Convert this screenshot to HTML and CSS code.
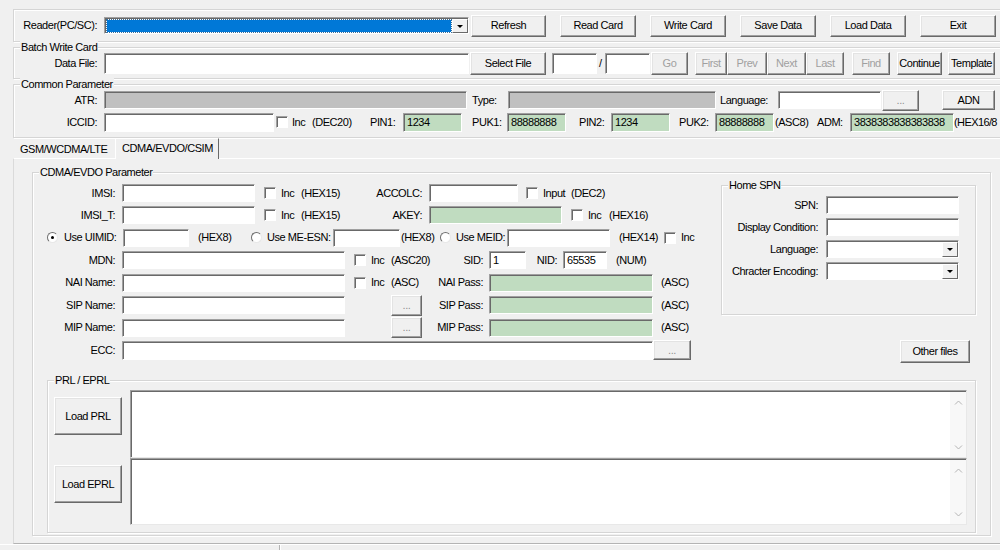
FILE: index.html
```html
<!DOCTYPE html>
<html>
<head>
<meta charset="utf-8">
<title>Card Writer</title>
<link rel="stylesheet" href="styles.css">
</head>
<body>
<div class="window">

  <div class="grp g-reader">
    <div class="row r31">
      <span class="lbl w90">Reader(PC/SC):</span>
      <div class="combo reader w365 h17"><div class="combo-val"></div><div class="drop"><i class="tri"></i></div></div>
      <button class="btn w75 h22 ml2">Refresh</button>
      <button class="btn w76 h22 ml14">Read Card</button>
      <button class="btn w76 h22 ml14">Write Card</button>
      <button class="btn w76 h22 ml14">Save Data</button>
      <button class="btn w76 h22 ml14">Load Data</button>
      <button class="btn w76 h22 ml14">Exit</button>
    </div>
  </div>

  <div class="grp g-batch">
    <span class="grp-title">Batch Write Card</span>
    <div class="row r30">
      <span class="lbl w90">Data File:</span>
      <div class="in w365 h21"></div>
      <button class="btn w76 h23 ml1">Select File</button>
      <div class="in w45 h21 ml6"></div>
      <span class="txt w8 pl2">/</span>
      <div class="in w45 h21"></div>
      <button class="btn dis w37 h23 ml1">Go</button>
      <button class="btn dis w32 h23 ml7">First</button>
      <button class="btn dis w40 h23">Prev</button>
      <button class="btn dis w39 h23">Next</button>
      <button class="btn dis w38 h23">Last</button>
      <button class="btn dis w38 h23 ml8">Find</button>
      <button class="btn w45 h23 ml7">Continue</button>
      <button class="btn w47 h23 ml6">Template</button>
    </div>
  </div>

  <div class="grp g-common">
    <span class="grp-title">Common Parameter</span>
    <div class="row r20">
      <span class="lbl w90">ATR:</span>
      <div class="in gray w363"></div>
      <span class="txt w41 pl5">Type:</span>
      <div class="in gray w208"></div>
      <span class="txt w62 pl4">Language:</span>
      <div class="in w103"></div>
      <button class="btn dots w37 h21 ml1">...</button>
      <button class="btn w53 h20 ml23">ADN</button>
    </div>
    <div class="row r20 mt2">
      <span class="lbl w90">ICCID:</span>
      <div class="in w170 h19"></div>
      <span class="cb ml2"></span>
      <span class="txt w24 pl4">Inc</span>
      <span class="txt w58">(DEC20)</span>
      <span class="txt w33">PIN1:</span>
      <div class="in green w59 h19">1234</div>
      <span class="txt w45 pl10">PUK1:</span>
      <div class="in green w59 h19">88888888</div>
      <span class="txt w45 pl13">PIN2:</span>
      <div class="in green w59 h19">1234</div>
      <span class="txt w45 pl9">PUK2:</span>
      <div class="in green w59 h19">88888888</div>
      <span class="txt w43 pl1">(ASC8)</span>
      <span class="txt w33">ADM:</span>
      <div class="in green w104 h19">3838383838383838</div>
      <span class="txt tight">(HEX16/8</span>
    </div>
  </div>

  <div class="tabs">
    <div class="tab">GSM/WCDMA/LTE</div>
    <div class="tab active">CDMA/EVDO/CSIM</div>
  </div>

  <div class="panel">
    <div class="grp g-cdma">
      <span class="grp-title">CDMA/EVDO Parameter</span>
      <div class="top">
        <div class="form">
          <div class="row r22">
            <span class="lbl w89">IMSI:</span>
            <div class="in w133"></div>
            <span class="cb ml9"></span>
            <span class="txt w25 pl5">Inc</span>
            <span class="txt w44">(HEX15)</span>
            <span class="lbl w84">ACCOLC:</span>
            <div class="in w89"></div>
            <span class="cb ml8"></span>
            <span class="txt w33 pl5">Input</span>
            <span class="txt">(DEC2)</span>
          </div>
          <div class="row r22">
            <span class="lbl w89">IMSI_T:</span>
            <div class="in w133"></div>
            <span class="cb ml9"></span>
            <span class="txt w25 pl5">Inc</span>
            <span class="txt w44">(HEX15)</span>
            <span class="lbl w84">AKEY:</span>
            <div class="in green w133"></div>
            <span class="cb ml9"></span>
            <span class="txt w26 pl5">Inc</span>
            <span class="txt">(HEX16)</span>
          </div>
          <div class="row r23">
            <span class="radio on ml14"></span>
            <span class="txt w65 pl6">Use UIMID:</span>
            <div class="in w66"></div>
            <span class="txt w62 pl9">(HEX8)</span>
            <span class="radio"></span>
            <span class="txt w71 pl5">Use ME-ESN:</span>
            <div class="in w67"></div>
            <span class="txt w40 pl1">(HEX8)</span>
            <span class="radio"></span>
            <span class="txt w56 pl5">Use MEID:</span>
            <div class="in w103"></div>
            <span class="txt w54 pl9">(HEX14)</span>
            <span class="cb"></span>
            <span class="txt pl5">Inc</span>
          </div>
          <div class="row r22">
            <span class="lbl w89">MDN:</span>
            <div class="in w223"></div>
            <span class="cb ml9"></span>
            <span class="txt w25 pl5">Inc</span>
            <span class="txt w49">(ASC20)</span>
            <span class="lbl w49 pr6">SID:</span>
            <div class="in w37">1</div>
            <span class="lbl w37 pr6">NID:</span>
            <div class="in w44">65535</div>
            <span class="txt pl9">(NUM)</span>
          </div>
          <div class="row r23">
            <span class="lbl w89">NAI Name:</span>
            <div class="in w223"></div>
            <span class="cb ml9"></span>
            <span class="txt w25 pl5">Inc</span>
            <span class="txt w34">(ASC)</span>
            <span class="lbl w64 pr6">NAI Pass:</span>
            <div class="in green w164"></div>
            <span class="txt pl8">(ASC)</span>
          </div>
          <div class="row r22">
            <span class="lbl w89">SIP Name:</span>
            <div class="in w223"></div>
            <button class="btn dots w31 h21 ml46">...</button>
            <span class="lbl w67 pr6">SIP Pass:</span>
            <div class="in green w164"></div>
            <span class="txt pl8">(ASC)</span>
          </div>
          <div class="row r23">
            <span class="lbl w89">MIP Name:</span>
            <div class="in w223"></div>
            <button class="btn dots w31 h21 ml46">...</button>
            <span class="lbl w67 pr6">MIP Pass:</span>
            <div class="in green w164"></div>
            <span class="txt pl8">(ASC)</span>
          </div>
          <div class="row r22">
            <span class="lbl w89">ECC:</span>
            <div class="in w531 h19"></div>
            <button class="btn dots w38 h20">...</button>
          </div>
        </div>

        <div class="side">
          <div class="grp g-spn">
            <span class="grp-title">Home SPN</span>
            <div class="row r22">
              <span class="lbl w104 pr8">SPN:</span>
              <div class="in w133"></div>
            </div>
            <div class="row r22">
              <span class="lbl w104 pr8">Display Condition:</span>
              <div class="in w133"></div>
            </div>
            <div class="row r22">
              <span class="lbl w104 pr8">Language:</span>
              <div class="combo w133 h18"><div class="combo-val"></div><div class="drop"><i class="tri"></i></div></div>
            </div>
            <div class="row r22">
              <span class="lbl w104 pr8">Chracter Encoding:</span>
              <div class="combo w133 h18"><div class="combo-val"></div><div class="drop"><i class="tri"></i></div></div>
            </div>
          </div>
          <button class="btn other w70 h23">Other files</button>
        </div>
      </div>

      <div class="grp g-prl">
        <span class="grp-title">PRL / EPRL</span>
        <div class="prl-btns">
          <button class="btn w68 h38">Load PRL</button>
          <button class="btn w68 h38 mt30">Load EPRL</button>
        </div>
        <div class="prl-tas">
          <div class="ta ta1">
            <div class="sb">
              <svg width="9" height="5" viewBox="0 0 9 5"><polyline points="1,4.5 4.5,1 8,4.5" fill="none" stroke="#b4b4b4" stroke-width="1"/></svg>
              <svg width="9" height="5" viewBox="0 0 9 5"><polyline points="1,0.5 4.5,4 8,0.5" fill="none" stroke="#b4b4b4" stroke-width="1"/></svg>
            </div>
          </div>
          <div class="ta ta2">
            <div class="sb">
              <svg width="9" height="5" viewBox="0 0 9 5"><polyline points="1,4.5 4.5,1 8,4.5" fill="none" stroke="#b4b4b4" stroke-width="1"/></svg>
              <svg width="9" height="5" viewBox="0 0 9 5"><polyline points="1,0.5 4.5,4 8,0.5" fill="none" stroke="#b4b4b4" stroke-width="1"/></svg>
            </div>
          </div>
        </div>
      </div>
    </div>
  </div>

  <div class="status">
    <div class="pane"></div>
    <div class="pane rest"></div>
  </div>
</div>
</body>
</html>
```

FILE: styles.css
```css
* { box-sizing: border-box; margin: 0; padding: 0; }
html, body { background: #f0f0f0; }
body {
  font-family: "Liberation Sans", Arial, sans-serif;
  font-size: 11px;
  letter-spacing: -0.45px;
  line-height: 13px;
  color: #000;
}
.window { width: 1000px; height: 550px; overflow: hidden; }

/* group boxes */
.grp {
  position: relative;
  border: 1px solid #d5d5d5;
  box-shadow: inset 1px 1px 0 #fff, 1px 1px 0 #fff;
}
.grp-title {
  position: absolute;
  left: 6px;
  top: -7px;
  padding: 0 1px;
  background: #f0f0f0;
  line-height: 13px;
  white-space: nowrap;
}
.g-reader { margin: 9px 0 0 13px; width: 1000px; height: 33px; }
.g-batch { margin: 5px 0 0 13px; width: 1000px; height: 32px; }
.g-common { margin: 5px 0 0 13px; width: 1000px; height: 54px; padding-top: 5px; }

/* rows */
.row { display: flex; align-items: center; }
.row > * { flex-shrink: 0; }
.r31 { height: 31px; }
.r30 { height: 30px; }
.r20 { height: 20px; }
.r22 { height: 22px; }
.r23 { height: 23px; }
.lbl { text-align: right; padding-right: 7px; white-space: nowrap; }
.txt { white-space: nowrap; }
.tight { letter-spacing: -0.6px; }

/* controls */
.in {
  height: 18px;
  background: #fff;
  border: 1px solid;
  border-color: #a0a0a0 #fff #fff #a0a0a0;
  box-shadow: inset 1px 1px 0 #696969;
  padding: 2px 0 0 3px;
  line-height: 13px;
  white-space: nowrap;
  overflow: hidden;
}
.in.green { background: #c0dcc0; }
.in.gray { background: #c0c0c0; }

.btn {
  font: inherit;
  letter-spacing: inherit;
  color: #000;
  background: #f0f0f0;
  border: 1px solid;
  border-color: #fff #696969 #696969 #fff;
  box-shadow: inset -1px -1px 0 #a0a0a0, inset 1px 1px 0 #e3e3e3;
  height: 22px;
  display: flex;
  align-items: center;
  justify-content: center;
  white-space: nowrap;
}
.btn.dis { color: #a0a0a0; }
.btn.dots { color: #909090; }

.cb {
  width: 12px;
  height: 12px;
  background: #fff;
  border: 1px solid;
  border-color: #a0a0a0 #fff #fff #a0a0a0;
  box-shadow: inset 1px 1px 0 #696969;
}
.radio {
  position: relative;
  width: 11px;
  height: 11px;
  border-radius: 50%;
  background: #fff;
  border: 1px solid;
  border-color: #707070 #e8e8e8 #e8e8e8 #707070;
}
.radio.on::after {
  content: "";
  position: absolute;
  left: 3px;
  top: 3px;
  width: 3px;
  height: 3px;
  border-radius: 50%;
  background: #000;
}

.combo {
  display: flex;
  height: 18px;
  background: #fff;
  border: 1px solid;
  border-color: #a0a0a0 #fff #fff #a0a0a0;
  box-shadow: inset 1px 1px 0 #696969;
  padding: 1px 0 0 1px;
}
.combo-val { flex: 1; }
.combo.reader .combo-val {
  margin: 1px;
  background: #0078d7;
  outline: 1px dotted #3b6e98;
}
.drop {
  width: 16px;
  height: 100%;
  background: #f0f0f0;
  border: 1px solid;
  border-color: #fff #696969 #696969 #fff;
  display: flex;
  align-items: center;
  justify-content: center;
}
.tri {
  display: block;
  width: 0;
  height: 0;
  border-left: 3px solid transparent;
  border-right: 3px solid transparent;
  border-top: 3px solid #000;
}

/* tabs */
.tabs { display: flex; align-items: flex-end; height: 20px; margin-left: 14px; }
.tab {
  width: 101px;
  height: 17px;
  line-height: 17px;
  padding-left: 6px;
  white-space: nowrap;
}
.tab.active {
  position: relative;
  z-index: 1;
  width: 104px;
  height: 21px;
  margin-bottom: -1px;
  padding: 2px 0 0 6px;
  line-height: 14px;
  background: #f0f0f0;
  border-top: 1px solid #fff;
  border-left: 1px solid #fff;
  border-right: 1px solid #696969;
}
.panel {
  margin-left: 13px;
  width: 1000px;
  height: 386px;
  border: 1px solid;
  border-color: #fff #a0a0a0 #b4b4b4 #dadada;
}

/* CDMA group */
.g-cdma { margin: 13px 0 0 18px; width: 959px; height: 364px; }
.top { display: flex; height: 207px; }
.form { width: 688px; padding-top: 9px; }
.side { width: 255px; padding-top: 12px; }
.g-spn { width: 255px; height: 130px; padding-top: 8px; }
.other { margin: 25px 0 0 179px; }

.g-prl { display: flex; margin-left: 14px; width: 929px; height: 153px; }
.prl-btns { margin-left: 6px; width: 68px; padding-top: 16px; }
.prl-tas { margin-left: 8px; width: 837px; padding-top: 9px; }
.ta {
  display: flex;
  justify-content: flex-end;
  background: #fff;
  border: 1px solid;
  border-color: #a0a0a0 #e8e8e8 #e8e8e8 #a0a0a0;
  box-shadow: inset 1px 1px 0 #696969;
}
.ta1 { height: 68px; }
.ta2 { height: 67px; }
.sb {
  width: 16px;
  margin-top: 1px;
  background: #f8f8f8;
  display: flex;
  flex-direction: column;
  justify-content: space-between;
  align-items: center;
  padding: 8px 0 7px;
}

/* status bar */
.status { display: flex; height: 7px; border-top: 1px solid #fff; }
.status .pane { width: 280px; border-right: 1px solid #b4b4b4; box-shadow: 1px 0 0 #fff; }
.status .rest { flex: 1; border-right: 0; box-shadow: none; }

/* sizes */
.w8 { width: 8px; } .w24 { width: 24px; } .w25 { width: 25px; } .w26 { width: 26px; }
.w31 { width: 31px; } .w32 { width: 32px; } .w33 { width: 33px; } .w34 { width: 34px; }
.w37 { width: 37px; } .w38 { width: 38px; } .w39 { width: 39px; } .w40 { width: 40px; }
.w41 { width: 41px; } .w43 { width: 43px; } .w44 { width: 44px; } .w45 { width: 45px; }
.w47 { width: 47px; } .w49 { width: 49px; } .w53 { width: 53px; } .w54 { width: 54px; }
.w56 { width: 56px; } .w58 { width: 58px; } .w59 { width: 59px; } .w62 { width: 62px; }
.w64 { width: 64px; } .w65 { width: 65px; } .w66 { width: 66px; } .w67 { width: 67px; }
.w68 { width: 68px; } .w70 { width: 70px; } .w71 { width: 71px; } .w75 { width: 75px; }
.w76 { width: 76px; } .w84 { width: 84px; } .w89 { width: 89px; } .w90 { width: 90px; }
.w103 { width: 103px; } .w104 { width: 104px; } .w133 { width: 133px; } .w164 { width: 164px; }
.w170 { width: 170px; } .w208 { width: 208px; } .w223 { width: 223px; } .w363 { width: 363px; }
.w365 { width: 365px; } .w531 { width: 531px; }
.h17 { height: 17px; } .h18 { height: 18px; } .h19 { height: 19px; } .h20 { height: 20px; }
.h21 { height: 21px; } .h22 { height: 22px; } .h23 { height: 23px; } .h38 { height: 38px; }
.ml1 { margin-left: 1px; } .ml2 { margin-left: 2px; } .ml6 { margin-left: 6px; }
.ml7 { margin-left: 7px; } .ml8 { margin-left: 8px; } .ml9 { margin-left: 9px; }
.ml14 { margin-left: 14px; } .ml23 { margin-left: 23px; } .ml46 { margin-left: 46px; }
.mt2 { margin-top: 2px; } .mt30 { margin-top: 30px; }
.pl1 { padding-left: 1px; } .pl2 { padding-left: 2px; } .pl4 { padding-left: 4px; }
.pl5 { padding-left: 5px; } .pl6 { padding-left: 6px; } .pl8 { padding-left: 8px; }
.pl9 { padding-left: 9px; } .pl10 { padding-left: 10px; } .pl13 { padding-left: 13px; }
.pr6 { padding-right: 6px; } .pr8 { padding-right: 8px; }
```
